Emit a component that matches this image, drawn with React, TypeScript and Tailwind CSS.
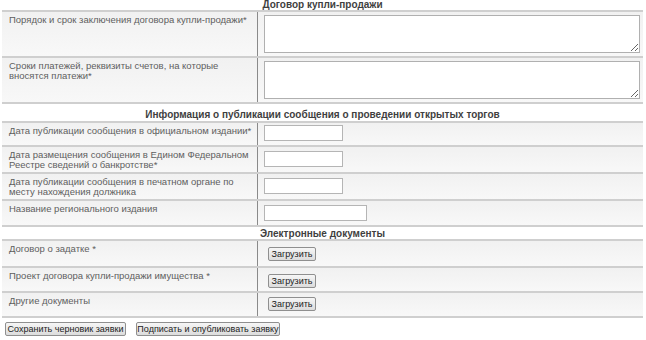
import React from "react";

const font = { fontFamily: '"Liberation Sans", Arial, sans-serif' };

function Header({ title, h, pt }: { title: string; h: string; pt: string }) {
  return (
    <div className={`${h} ${pt} bg-white border-b-2 border-[#cfcfcf] text-center text-[10px] leading-[10px] font-bold text-[#3f3f3f] overflow-hidden whitespace-nowrap`}>
      {title}
    </div>
  );
}

function Row({ label, h, children }: { label: React.ReactNode; h: string; children: React.ReactNode }) {
  return (
    <div className={`${h} grid grid-cols-[256px_1fr] border-b-2 border-[#cfcfcf] bg-gradient-to-b from-[#f1f1f1] to-[#f8f8f8]`}>
      <div className="pl-[7px] pt-[3px] pr-0 text-[9.5px] leading-[10px] text-[#5e5e5e] border-r border-[#8a8a8a] whitespace-nowrap">{label}</div>
      <div className="pl-[6px]">{children}</div>
    </div>
  );
}

function TextInput({ w, mt }: { w: string; mt: string }) {
  return <input type="text" className={`${w} ${mt} h-[16px] block bg-white border border-[#b5b5b5] outline-none`} />;
}

const btn =
  "h-[14px] px-0 whitespace-nowrap text-[9px] leading-[12px] text-[#222] bg-gradient-to-b from-[#f6f6f6] to-[#dcdcdc] border border-[#8f8f8f] rounded-[2px]";

function UploadBtn({ mt }: { mt: string }) {
  return <button className={`${mt} ml-[4px] block w-[48px] ${btn}`}>Загрузить</button>;
}

export default function App() {
  return (
    <div style={font} className="w-[646px] h-[340px] bg-white overflow-hidden">
      <div className="mx-[2px] w-[641px]">
        <Header title="Договор купли-продажи" h="h-[12px]" pt="pt-0" />
        <Row label="Порядок и срок заключения договора купли-продажи*" h="h-[46px]">
          <textarea className="mt-[3px] block w-[376px] h-[38px] bg-white border border-[#b0b0b0] outline-none resize" />
        </Row>
        <Row label={<>Сроки платежей, реквизиты счетов, на которые<br />вносятся платежи*</>} h="h-[46px]">
          <textarea className="mt-[3px] block w-[376px] h-[38px] bg-white border border-[#b0b0b0] outline-none resize" />
        </Row>
        <Header title="Информация о публикации сообщения о проведении открытых торгов" h="h-[19px]" pt="pt-[6px]" />
        <Row label="Дата публикации сообщения в официальном издании*" h="h-[24px]">
          <TextInput w="w-[79px]" mt="mt-[2px]" />
        </Row>
        <Row label={<>Дата размещения сообщения в Едином Федеральном<br />Реестре сведений о банкротстве*</>} h="h-[27px]">
          <TextInput w="w-[79px]" mt="mt-[4px]" />
        </Row>
        <Row label={<>Дата публикации сообщения в печатном органе по<br />месту нахождения должника</>} h="h-[27px]">
          <TextInput w="w-[79px]" mt="mt-[4px]" />
        </Row>
        <Row label="Название регионального издания" h="h-[26px]">
          <TextInput w="w-[103px]" mt="mt-[4px]" />
        </Row>
        <Header title="Электронные документы" h="h-[14px]" pt="pt-[2px]" />
        <Row label="Договор о задатке *" h="h-[27px]">
          <UploadBtn mt="mt-[6px]" />
        </Row>
        <Row label="Проект договора купли-продажи имущества *" h="h-[25px]">
          <UploadBtn mt="mt-[6px]" />
        </Row>
        <Row label="Другие документы" h="h-[25px]">
          <UploadBtn mt="mt-[4px]" />
        </Row>
        <div className="flex gap-[10px] mt-[4px] ml-[3px]">
          <button className={`w-[121px] ${btn}`}>Сохранить черновик заявки</button>
          <button className={`w-[144px] ${btn}`}>Подписать и опубликовать заявку</button>
        </div>
      </div>
    </div>
  );
}
